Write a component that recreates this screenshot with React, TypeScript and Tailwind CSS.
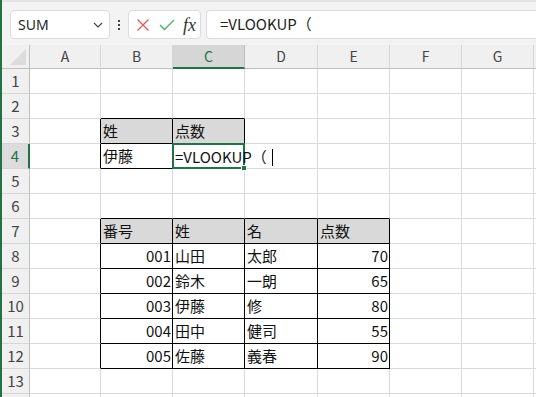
import React from "react";

type Cell = { text: string; fill?: boolean; right?: boolean };

const cols = [
  { l: "A", w: 71 },
  { l: "B", w: 72 },
  { l: "C", w: 72 },
  { l: "D", w: 73 },
  { l: "E", w: 72 },
  { l: "F", w: 72 },
  { l: "G", w: 72 },
  { l: "H", w: 72 },
];

const data: Record<string, Cell> = {
  B3: { text: "姓", fill: true },
  C3: { text: "点数", fill: true },
  B4: { text: "伊藤" },
  B7: { text: "番号", fill: true },
  C7: { text: "姓", fill: true },
  D7: { text: "名", fill: true },
  E7: { text: "点数", fill: true },
  B8: { text: "001", right: true },
  C8: { text: "山田" },
  D8: { text: "太郎" },
  E8: { text: "70", right: true },
  B9: { text: "002", right: true },
  C9: { text: "鈴木" },
  D9: { text: "一朗" },
  E9: { text: "65", right: true },
  B10: { text: "003", right: true },
  C10: { text: "伊藤" },
  D10: { text: "修" },
  E10: { text: "80", right: true },
  B11: { text: "004", right: true },
  C11: { text: "田中" },
  D11: { text: "健司" },
  E11: { text: "55", right: true },
  B12: { text: "005", right: true },
  C12: { text: "佐藤" },
  D12: { text: "義春" },
  E12: { text: "90", right: true },
};

// tables on the sheet: [colFrom, colTo, rowFrom, rowTo]
const tables = [
  [1, 2, 3, 4],
  [1, 4, 7, 12],
];

function inTable(c: number, r: number) {
  return tables.some(([c1, c2, r1, r2]) => c >= c1 && c <= c2 && r >= r1 && r <= r2);
}

const font = { fontFamily: '"Noto Sans CJK JP", "Noto Sans", sans-serif' };

function FormulaBar() {
  return (
    <div className="flex h-[45px] items-start bg-[#f3f3f3] pt-[8px] border-t-2 border-[#e3e3e3]">
      <div className="ml-[8px] flex h-[29px] w-[100px] items-center justify-between rounded-[4px] border border-[#dcdcdc] bg-white pl-[7px] pr-[6px]">
        <span className="text-[14px] text-[#262626]" style={{ fontFamily: '"Noto Sans", sans-serif' }}>
          SUM
        </span>
        <svg width="10" height="6" viewBox="0 0 10 6">
          <path d="M1 1l4 4 4-4" fill="none" stroke="#444" strokeWidth="1.2" />
        </svg>
      </div>
      <div className="mx-[8px] flex h-[29px] flex-col items-center justify-center gap-[2px]">
        <span className="block h-[2px] w-[2px] bg-[#444]" />
        <span className="block h-[2px] w-[2px] bg-[#444]" />
        <span className="block h-[2px] w-[2px] bg-[#444]" />
      </div>
      <div className="flex h-[29px] w-[73px] items-center rounded-[4px] border border-[#dcdcdc] bg-white pl-[7px]">
        <svg width="14" height="14" viewBox="0 0 14 14">
          <path d="M1.5 1.5l11 11M12.5 1.5l-11 11" stroke="#e05a5a" strokeWidth="1.3" />
        </svg>
        <svg width="16" height="12" viewBox="0 0 16 12" className="ml-[9px]">
          <path d="M1 6l4.5 4.5L15 1" fill="none" stroke="#4caf6a" strokeWidth="1.4" />
        </svg>
        <span
          className="ml-[8px] text-[18px] leading-none italic text-[#333]"
          style={{ fontFamily: '"Liberation Serif", serif' }}
        >
          fx
        </span>
      </div>
      <div className="ml-[5px] flex h-[29px] flex-1 items-center rounded-l-[4px] border border-r-0 border-[#dcdcdc] bg-white pl-[13px]">
        <span className="text-[15px] text-[#222]" style={font}>
          =VLOOKUP（
        </span>
      </div>
    </div>
  );
}

function HeaderRow() {
  return (
    <div className="flex h-[24px]">
      <div className="relative w-[28px] shrink-0 border-r border-b border-[#bfbfbf] bg-[#f0f0f0]">
        <svg width="16" height="16" viewBox="0 0 16 16" className="absolute right-[3px] bottom-[3px]">
          <path d="M16 0v16H0z" fill="#dcdcdc" />
        </svg>
      </div>
      {cols.map((c) => {
        const sel = c.l === "C";
        return (
          <div
            key={c.l}
            style={{ width: c.w, ...font }}
            className={
              sel
                ? "flex shrink-0 items-center justify-center border-r border-[#bfbfbf] border-b-2 border-b-[#217346] bg-[#d6d6d6] text-[14px] text-[#217346]"
                : "flex shrink-0 items-center justify-center border-r border-b border-[#d6d6d6] border-b-[#bfbfbf] bg-[#f0f0f0] text-[14px] text-[#444]"
            }
          >
            {c.l}
          </div>
        );
      })}
    </div>
  );
}

function Row({ r }: { r: number }) {
  const sel = r === 4;
  return (
    <div className="flex h-[25px]">
      <div
        style={font}
        className={
          sel
            ? "flex w-[28px] shrink-0 items-center justify-center border-r-2 border-r-[#217346] border-b border-b-[#d6d6d6] bg-[#dcdcdc] text-[15px] text-[#217346]"
            : "flex w-[28px] shrink-0 items-center justify-center border-r border-b border-r-[#bfbfbf] border-b-[#d6d6d6] bg-[#f0f0f0] text-[15px] text-[#444]"
        }
      >
        {r}
      </div>
      {cols.map((c, ci) => {
        const key = c.l + r;
        const cell = data[key];
        const blackR = inTable(ci, r) || inTable(ci + 1, r);
        const blackB = inTable(ci, r) || inTable(ci, r + 1);
        const active = key === "C4";
        return (
          <div
            key={key}
            style={{ width: c.w, ...font }}
            className={[
              "relative flex shrink-0 items-center border-r border-b text-[15px] text-[#111]",
              blackR ? "border-r-black" : "border-r-[#dadada]",
              blackB ? "border-b-black" : "border-b-[#dadada]",
              cell?.fill ? "bg-[#d9d9d9]" : "bg-white",
              cell?.right ? "justify-end pr-[1px]" : "pl-[2px]",
            ].join(" ")}
          >
            {cell?.text}
            {active && (
              <div className="absolute -left-[1px] -top-[1px] z-10 h-[26px] w-[73px] border-2 border-[#217346]">
                <span className="absolute left-[1px] top-[1px] whitespace-nowrap text-[15px] leading-[20px] text-[#111]">
                  =VLOOKUP（
                  <span className="ml-[5px] inline-block h-[17px] w-[1px] translate-y-[3px] bg-black" />
                </span>
                <span className="absolute -right-[4px] -bottom-[4px] h-[6px] w-[6px] border border-white bg-[#217346]" />
              </div>
            )}
          </div>
        );
      })}
    </div>
  );
}

export default function App() {
  const rows = Array.from({ length: 14 }, (_, i) => i + 1);
  return (
    <div className="h-[397px] w-[536px] overflow-hidden border-l-2 border-[#217346] bg-white">
      <FormulaBar />
      <HeaderRow />
      {rows.map((r) => (
        <Row key={r} r={r} />
      ))}
    </div>
  );
}
